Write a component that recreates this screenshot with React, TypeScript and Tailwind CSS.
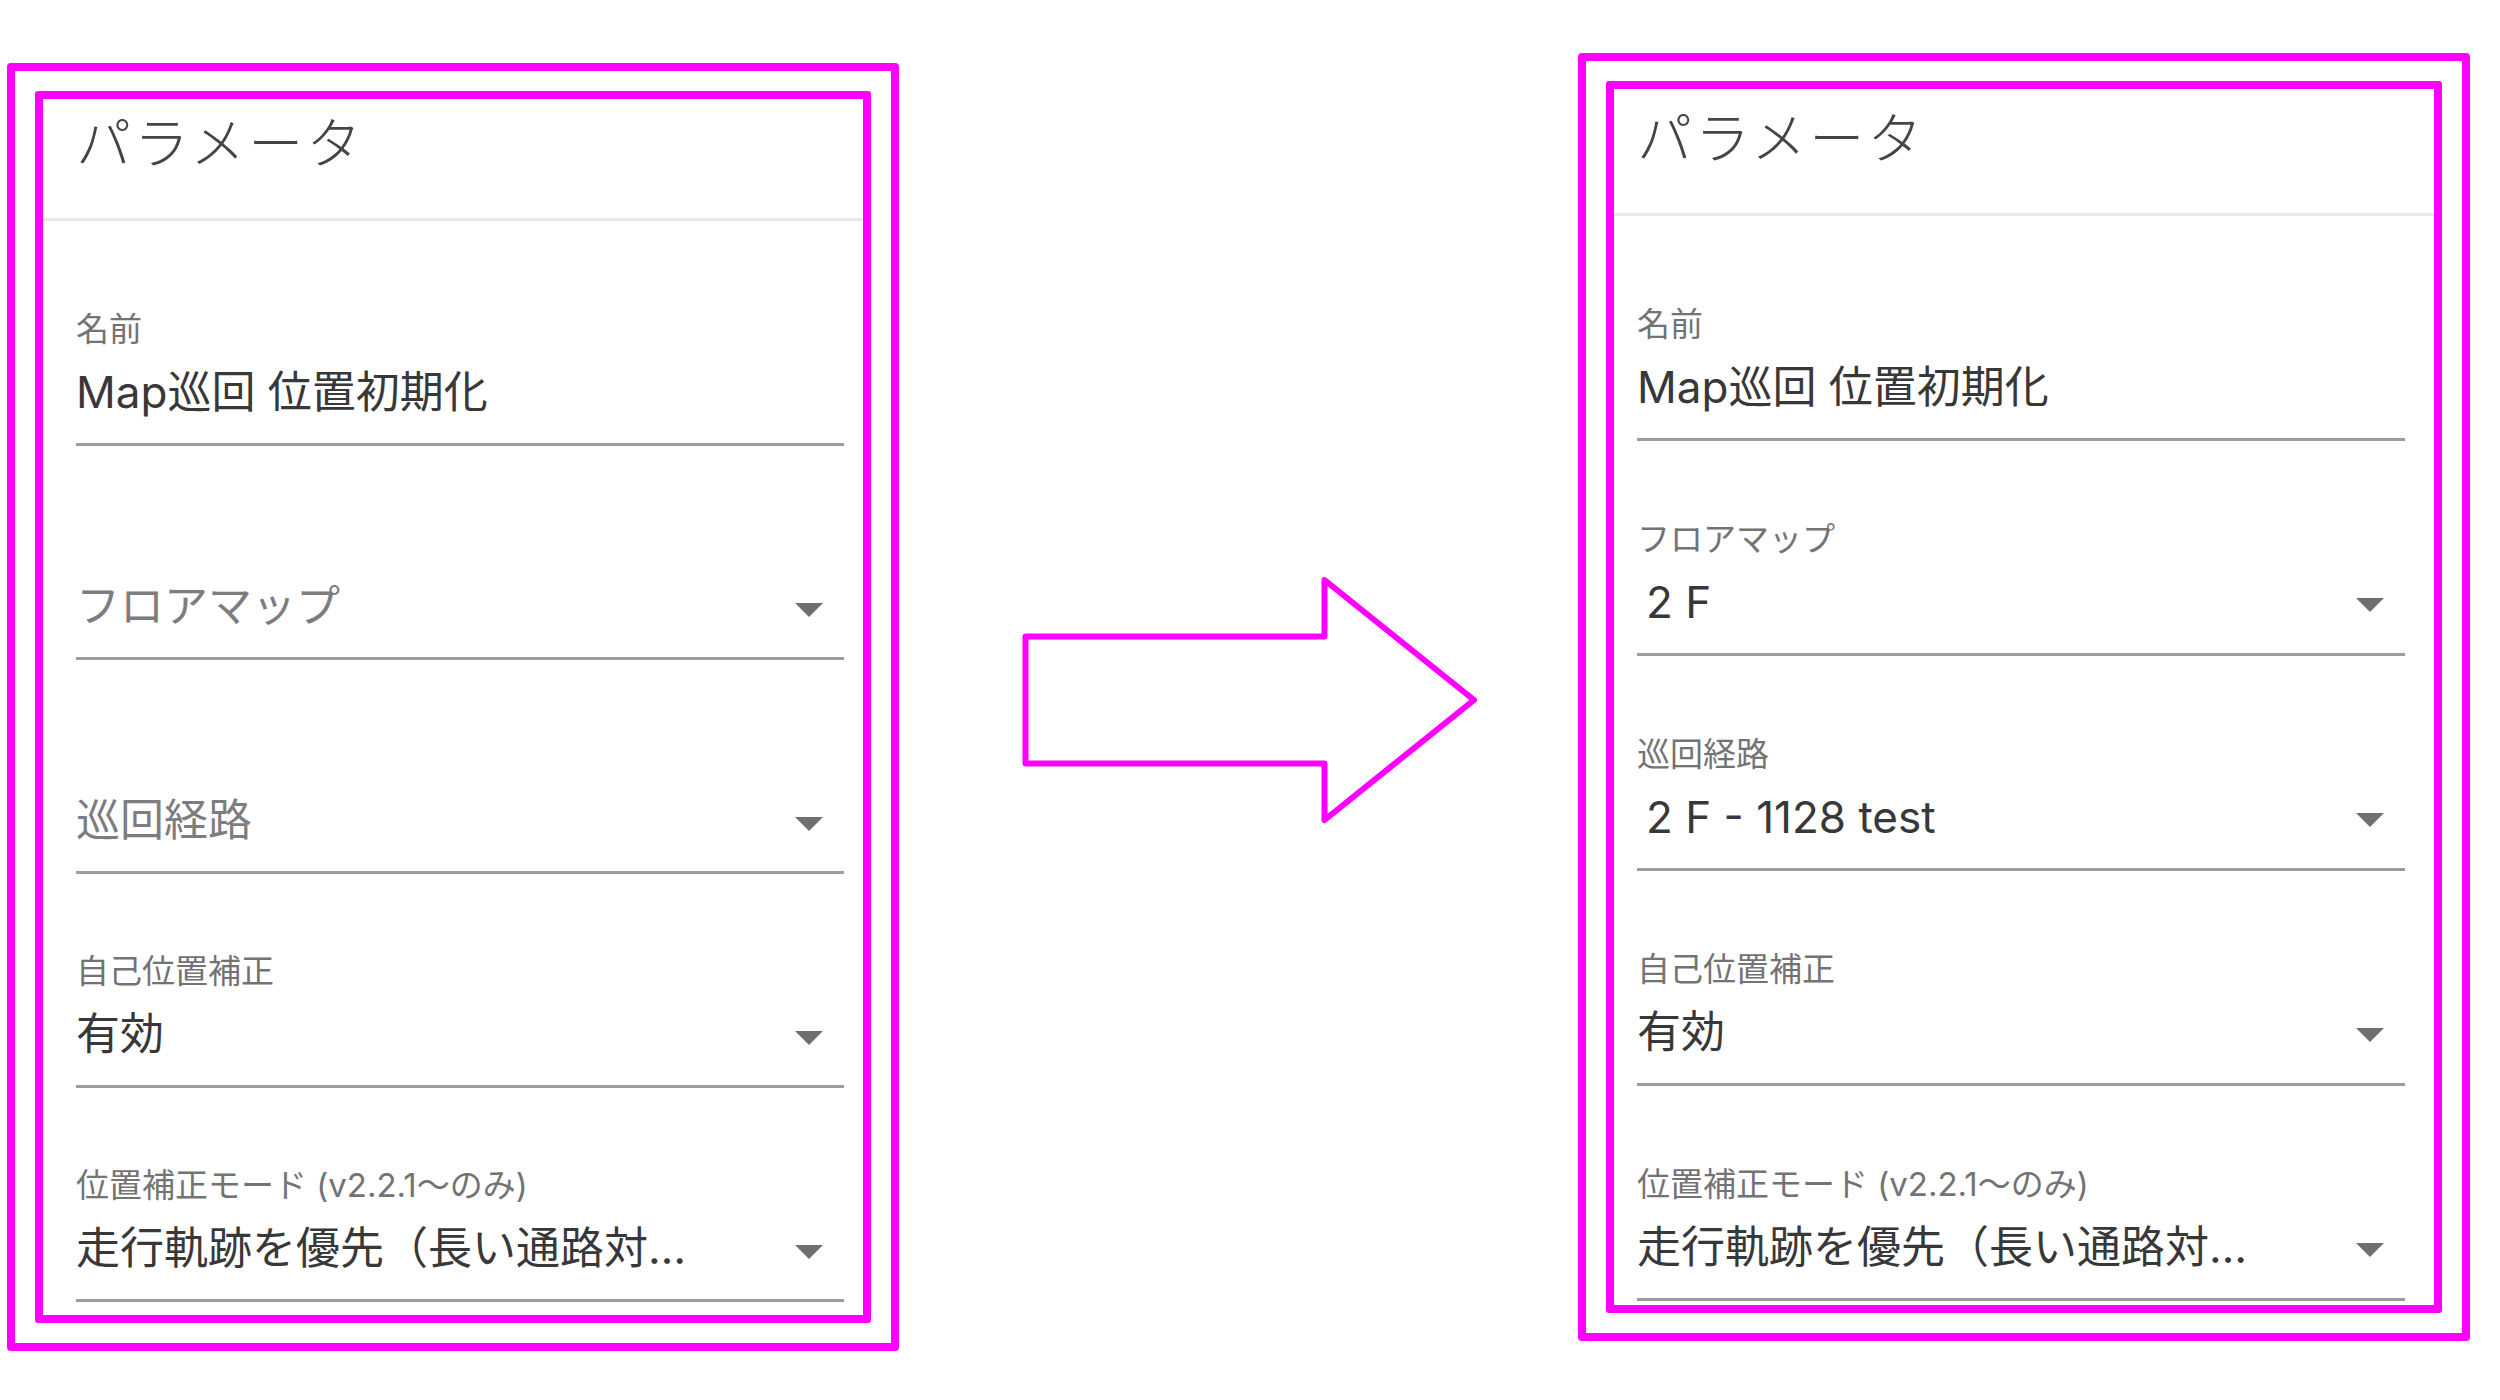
import React from "react";

type FieldProps = {
  label?: string;
  value?: string;
  placeholder?: string;
  select?: boolean;
  indent?: boolean;
  pt: string;
};

function DropArrow() {
  return (
    <svg
      className="absolute right-[21px] top-[27.5px]"
      width="28"
      height="14"
      viewBox="0 0 28 14"
    >
      <path d="M0 0 L28 0 L14 14 Z" fill="#6f6f6f" />
    </svg>
  );
}

function Field({ label, value, placeholder, select, indent, pt }: FieldProps) {
  return (
    <div className={pt}>
      <div className="h-[40px] whitespace-nowrap text-[33px] leading-[40px] text-[#737373]">
        {label ?? ""}
      </div>
      <div className="relative mt-[12px] h-[85px] w-[768px] border-b-[3px] border-[#9c9c9c]">
        {value ? (
          <div
            className={`h-[62px] whitespace-nowrap text-[44px] leading-[62px] text-[#383838] ${
              indent ? "pl-[9px]" : ""
            }`}
          >
            {value}
          </div>
        ) : (
          <div className="h-[62px] whitespace-nowrap text-[44px] leading-[62px] text-[#7d7d7d]">
            {placeholder}
          </div>
        )}
        {select ? <DropArrow /> : null}
      </div>
    </div>
  );
}

type PanelProps = {
  filled: boolean;
  mt: string;
  pl: string;
  headerPt: string;
  gap: string;
};

function Panel({ filled, mt, pl, headerPt, gap }: PanelProps) {
  return (
    <div
      className={`${mt} h-[1288px] w-[892px] shrink-0 rounded-[4px] border-[8px] border-[#ff00ff] p-[20px]`}
    >
      <div className="h-full w-full overflow-hidden rounded-[3px] border-[8px] border-[#ff00ff] bg-white">
        <div className={`${headerPt} ${pl}`}>
          <div className="h-[66px] whitespace-nowrap text-[55px] font-light leading-[66px] tracking-[3px] text-[#454545]">
            パラメータ
          </div>
        </div>
        <div className="mt-[42px] h-[3px] w-full bg-[#e8e8e8]" />
        <div className={pl}>
          <Field pt="pt-[88px]" label="名前" value="Map巡回 位置初期化" />
          {filled ? (
            <Field pt={gap} label="フロアマップ" value="2 F" indent select />
          ) : (
            <Field pt={gap} placeholder="フロアマップ" select />
          )}
          {filled ? (
            <Field pt={gap} label="巡回経路" value="2 F - 1128 test" indent select />
          ) : (
            <Field pt={gap} placeholder="巡回経路" select />
          )}
          <Field pt={gap} label="自己位置補正" value="有効" select />
          <Field
            pt={gap}
            label="位置補正モード (v2.2.1〜のみ)"
            value="走行軌跡を優先（長い通路対…"
            select
          />
        </div>
      </div>
    </div>
  );
}

export default function App() {
  return (
    <div className="flex h-[1400px] w-[2500px] items-start overflow-hidden bg-white pl-[7px] font-['Inter','Noto_Sans_CJK_JP',sans-serif]">
      <Panel
        filled={false}
        mt="mt-[63px]"
        pl="pl-[33px]"
        headerPt="pt-[11px]"
        gap="pt-[77px]"
      />
      <svg
        width="679"
        height="1400"
        viewBox="899 0 679 1400"
        className="shrink-0"
      >
        <polygon
          points="1025.5,636.5 1324.5,636.5 1324.5,580 1474,700 1324.5,820 1324.5,763.5 1025.5,763.5"
          fill="none"
          stroke="#ff00ff"
          strokeWidth="6"
          strokeLinejoin="round"
        />
      </svg>
      <Panel
        filled={true}
        mt="mt-[53px]"
        pl="pl-[23px]"
        headerPt="pt-[15.5px]"
        gap="pt-[78px]"
      />
    </div>
  );
}
